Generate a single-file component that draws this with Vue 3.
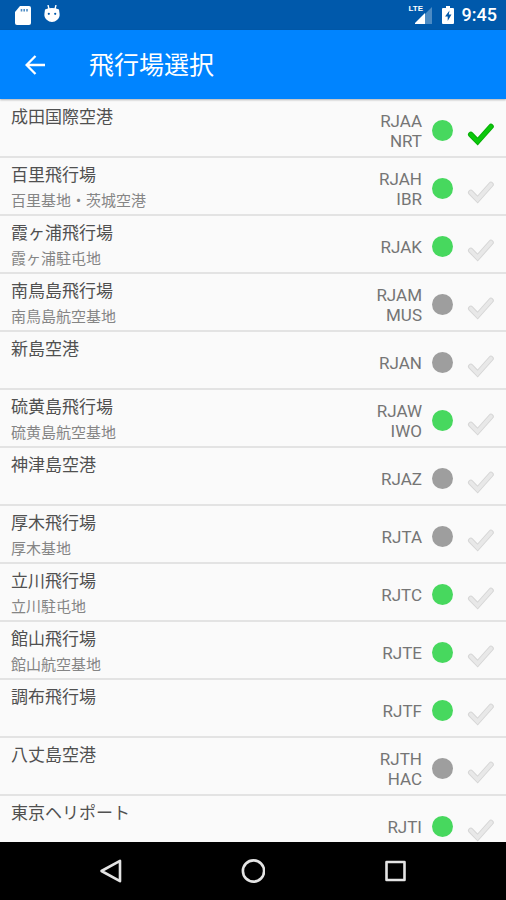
<script setup>
import { ref } from 'vue'

const airports = ref([
  { name: '成田国際空港', sub: '', icao: 'RJAA', iata: 'NRT', open: true, picked: true },
  { name: '百里飛行場', sub: '百里基地・茨城空港', icao: 'RJAH', iata: 'IBR', open: true, picked: false },
  { name: '霞ヶ浦飛行場', sub: '霞ヶ浦駐屯地', icao: 'RJAK', iata: '', open: true, picked: false },
  { name: '南鳥島飛行場', sub: '南鳥島航空基地', icao: 'RJAM', iata: 'MUS', open: false, picked: false },
  { name: '新島空港', sub: '', icao: 'RJAN', iata: '', open: false, picked: false },
  { name: '硫黄島飛行場', sub: '硫黄島航空基地', icao: 'RJAW', iata: 'IWO', open: true, picked: false },
  { name: '神津島空港', sub: '', icao: 'RJAZ', iata: '', open: false, picked: false },
  { name: '厚木飛行場', sub: '厚木基地', icao: 'RJTA', iata: '', open: false, picked: false },
  { name: '立川飛行場', sub: '立川駐屯地', icao: 'RJTC', iata: '', open: true, picked: false },
  { name: '館山飛行場', sub: '館山航空基地', icao: 'RJTE', iata: '', open: true, picked: false },
  { name: '調布飛行場', sub: '', icao: 'RJTF', iata: '', open: true, picked: false },
  { name: '八丈島空港', sub: '', icao: 'RJTH', iata: 'HAC', open: false, picked: false },
  { name: '東京ヘリポート', sub: '', icao: 'RJTI', iata: '', open: true, picked: false },
])
</script>

<template>
  <div class="screen">
    <div class="status">
      <svg class="sd" viewBox="0 0 16 19" width="16" height="19">
        <path d="M5 0h9a2 2 0 0 1 2 2v15a2 2 0 0 1-2 2H2a2 2 0 0 1-2-2V6z" fill="#fff" />
        <path d="M6.5 3v2.5M9.2 3v2.5M12 3v2.5" stroke="#4c8bc4" stroke-width="1.6" />
      </svg>
      <svg class="droid" viewBox="0 0 16 18" width="16" height="18">
        <path d="M4 0l1 4M12 0l-1 4" stroke="#fff" stroke-width="1.4" />
        <path d="M1 4.4Q8 1.600 15 4.400L15.600 9q.4 3.500-2.600 6-2 2-5 2t-5-2Q0 12.500.4 9z" fill="#fff" />
        <circle cx="4.8" cy="8.800" r="1.1" fill="#0059ab" />
        <circle cx="11.2" cy="8.800" r="1.1" fill="#0059ab" />
      </svg>
      <span class="spacer"></span>
      <span class="signal">
        <svg viewBox="0 0 22 18" width="22" height="18">
          <path d="M22 1v17H5z" fill="#4c8bc4" />
          <path d="M15 7v11H5V17z" fill="#fff" />
        </svg>
        <span class="lte">LTE</span>
      </span>
      <svg class="battery" viewBox="0 0 12 18" width="12" height="18">
        <path d="M4 0h4v2h3a1 1 0 0 1 1 1v14a1 1 0 0 1-1 1H1a1 1 0 0 1-1-1V3a1 1 0 0 1 1-1h3z" fill="#fff" />
        <path d="M7.500 4.500L3 10.500h2.700v4.500l3.800-6.500H6.800z" fill="#0059ab" />
      </svg>
      <time class="clock">9:45</time>
    </div>

    <header class="bar">
      <button class="back" type="button" aria-label="戻る">
        <svg viewBox="0 0 20 20" width="20" height="20" fill="none" stroke="#fff" stroke-width="2.3">
          <path d="M10.500 1L1.600 10l8.900 9M2 10h18" />
        </svg>
      </button>
      <h1>飛行場選択</h1>
    </header>

    <ul class="list">
      <li v-for="a in airports" :key="a.icao">
        <label class="row">
          <span class="names">
            <span class="name">{{ a.name }}</span>
            <span v-if="a.sub" class="sub">{{ a.sub }}</span>
          </span>
          <span class="codes">
            <span>{{ a.icao }}</span>
            <span v-if="a.iata">{{ a.iata }}</span>
          </span>
          <span class="dot" :class="{ open: a.open }"></span>
          <span class="tick">
            <input v-model="a.picked" type="checkbox" />
            <svg viewBox="0 0 28 24" width="28" height="24" :class="{ on: a.picked }">
              <path class="edge" d="M3.800 12.500L10.600 19.500 24 4.500" />
              <path class="face" d="M3.800 12.500L10.600 19.500 24 4.500" />
            </svg>
          </span>
        </label>
      </li>
    </ul>

    <nav class="nav">
      <button type="button" aria-label="戻る">
        <svg viewBox="0 0 24 24" width="24" height="24"><path d="M21 1.800v20.400L2.500 12z" /></svg>
      </button>
      <button type="button" aria-label="ホーム">
        <svg viewBox="0 0 24 24" width="24" height="24"><circle cx="12.500" cy="12" r="10.600" /></svg>
      </button>
      <button type="button" aria-label="最近">
        <svg viewBox="0 0 24 24" width="24" height="24"><rect x="3.500" y="3" width="18" height="18" /></svg>
      </button>
    </nav>
  </div>
</template>

<style>
body {
  margin: 0;
  background: #fafafa;
}
</style>

<style scoped>
.screen {
  display: flex;
  flex-direction: column;
  height: 100vh;
  overflow: hidden;
  background: #fafafa;
  font-family: Roboto, "Noto Sans CJK JP", sans-serif;
}
.status {
  display: flex;
  flex: none;
  align-items: center;
  height: 30px;
  padding: 0 9px 0 15px;
  background: #0059ab;
  color: #fff;
}
.droid {
  margin-left: 13px;
  margin-bottom: 2px;
}
.spacer {
  flex: 1;
}
.signal {
  position: relative;
  display: flex;
  margin-right: 10px;
}
.lte {
  position: absolute;
  top: -2px;
  left: -1px;
  background: #0059ab;
  font-family: "Liberation Sans", sans-serif;
  font-size: 8px;
  font-weight: 700;
  line-height: 10px;
}
.battery {
  margin-right: 8px;
}
.clock {
  font-size: 18px;
  font-weight: 500;
  line-height: 30px;
}
.bar {
  position: relative;
  z-index: 1;
  display: flex;
  flex: none;
  align-items: center;
  gap: 34px;
  height: 69px;
  padding: 0 15px;
  background: #0084ff;
  box-shadow: 0 1px 2px rgba(0, 0, 0, 0.3);
  color: #fff;
}
button {
  display: flex;
  align-items: center;
  justify-content: center;
  padding: 0;
  border: 0;
  background: none;
}
.back {
  width: 40px;
  height: 40px;
}
h1 {
  margin: 0;
  padding-top: 2px;
  font-size: 25px;
  font-weight: 400;
  line-height: 36px;
}
.list {
  flex: 1;
  min-height: 0;
  margin: 0;
  padding: 1px 0 0;
  overflow: hidden;
  list-style: none;
}
.row {
  display: flex;
  align-items: center;
  box-sizing: border-box;
  height: 58px;
  padding: 0 11px;
  border-bottom: 2px solid #e3e3e3;
}
.names {
  display: flex;
  flex: 1;
  flex-direction: column;
  align-self: flex-start;
  padding-top: 4px;
}
.name {
  color: #505050;
  font-size: 17px;
  line-height: 26px;
}
.sub {
  color: #858585;
  font-size: 15px;
  line-height: 26px;
}
.codes {
  display: flex;
  flex-direction: column;
  padding-top: 6px;
  color: #757575;
  font-size: 17px;
  line-height: 20px;
  text-align: right;
}
.dot {
  width: 21px;
  height: 21px;
  margin: 5px 14px 0 10px;
  border-radius: 50%;
  background: #9e9e9e;
}
.dot.open {
  background: #47d85e;
}
.tick {
  position: relative;
  display: flex;
  padding-top: 12px;
}
.tick input {
  position: absolute;
  inset: 0;
  width: 100%;
  height: 100%;
  margin: 0;
  opacity: 0;
}
.tick svg {
  fill: none;
  stroke-linecap: round;
}
.edge {
  stroke: #d6d6d6;
  stroke-width: 5.6;
}
.face {
  stroke: #e8e8e8;
  stroke-width: 3.6;
}
.on .edge {
  stroke: #08ac08;
}
.on .face {
  stroke: #0bc80b;
}
.nav {
  display: flex;
  flex: none;
  align-items: center;
  justify-content: center;
  gap: 94px;
  height: 58px;
  background: #000;
}
.nav button {
  width: 48px;
  height: 48px;
}
.nav svg {
  fill: none;
  stroke: #e4e4e4;
  stroke-width: 2.6;
  stroke-linejoin: round;
}
</style>
